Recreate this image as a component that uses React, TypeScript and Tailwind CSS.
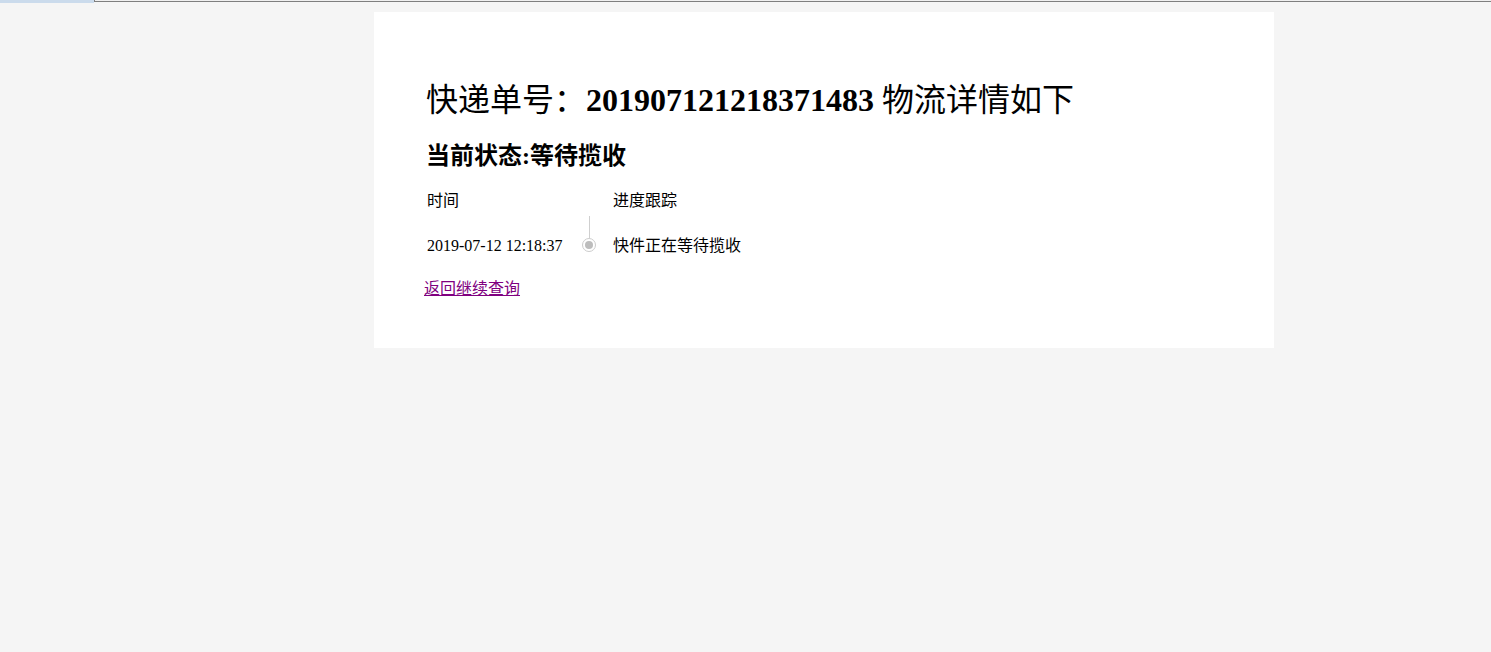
const serif = { fontFamily: '"Liberation Serif", "Noto Sans CJK SC", serif' };

const rows = [{ time: "2019-07-12 12:18:37", context: "快件正在等待揽收" }];

export default function App() {
  return (
    <div className="min-h-screen bg-[#f5f5f5] text-black" style={serif}>
      {/* browser chrome remnant */}
      <div className="flex h-[3px]">
        <div className="w-[94px] h-[3px] bg-[#cbdbec]" />
        <div className="flex-1 h-[2px] border-l border-b border-[#7f7f7f] bg-[#f0f0f0]" />
      </div>

      <div className="w-[900px] ml-[374px] mt-[9px] bg-white px-[50px] pt-[68px] pb-[47px]">
        <h1 className="text-[32px] leading-[40px] font-bold ml-[2px] whitespace-nowrap">
          <span className="font-normal">快递单号：</span>201907121218371483{" "}
          <span className="font-normal">物流详情如下</span>
        </h1>
        <h3 className="text-[24px] leading-[32px] font-bold mt-[20px] ml-[2px]">当前状态:等待揽收</h3>

        <div className="mt-[17px] ml-[3px]">
          <div className="flex h-[24px] text-[16px] leading-[24px]">
            <div className="w-[155px]">时间</div>
            <div className="w-[14px]" />
            <div className="ml-[17px]">进度跟踪</div>
          </div>
          {rows.map((r) => (
            <div key={r.time} className="flex text-[16px] leading-[24px] h-[44px]">
              <div className="w-[155px] pt-[21px]">{r.time}</div>
              <div className="w-[14px] flex flex-col items-center">
                <div className="w-px h-[22px] mt-[3px] bg-[#cfcfcf]" />
                <div className="w-[14px] h-[14px] rounded-full border border-[#cccccc] flex items-center justify-center">
                  <div className="w-[8px] h-[8px] rounded-full bg-[#bdbdbd]" />
                </div>
              </div>
              <div className="ml-[17px] pt-[21px]">{r.context}</div>
            </div>
          ))}
        </div>

        <a href="#" className="block w-fit mt-[20px] text-[16px] leading-[24px] text-[#800080] underline">
          返回继续查询
        </a>
      </div>
    </div>
  );
}
